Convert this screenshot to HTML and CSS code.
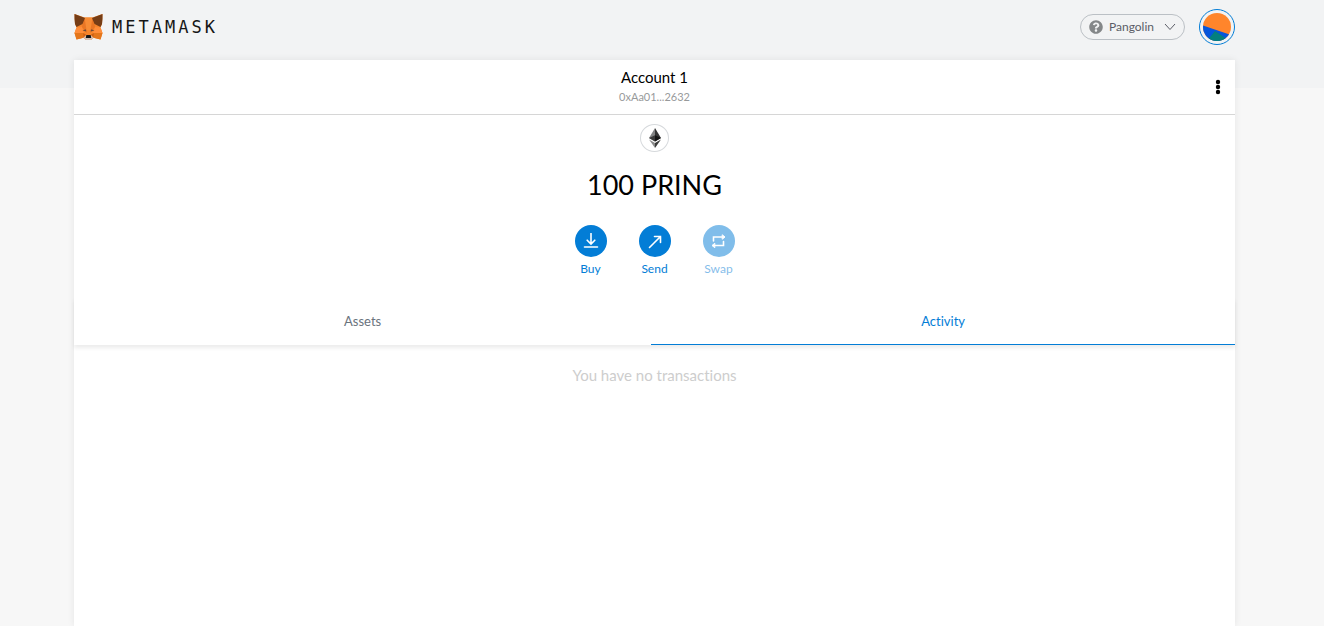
FILE: index.html
```html
<!DOCTYPE html>
<html lang="en">
<head>
<meta charset="utf-8">
<meta name="viewport" content="width=device-width, initial-scale=1">
<title>MetaMask</title>
<link rel="stylesheet" href="styles.css">
</head>
<body>
<div class="app">
  <header class="header">
    <a class="brand" href="#" aria-label="MetaMask home">
      <svg class="brand-fox" viewBox="0 0 29 28" aria-hidden="true">
        <path fill="#f6852b" d="M.5 1 10.500 4.500H18.500L28.500 1 28 11 26.500 14.500 28.500 20 26.500 26.500 19.500 24.800 17 27H12L9.500 24.800 2.500 26.500.5 20 2.500 14.500 1 11Z"/>
        <path fill="#ff8d3a" d="M2.500 14.500 8 14 10 20H.5ZM26.500 14.500 21 14 19 20H28.500Z"/>
        <path fill="#e97625" d="M10.500 4.500 14 12 12.500 20 8 14 8.500 11ZM18.500 4.500 15 12 16.500 20 21 14 20.500 11Z"/>
        <path fill="#f88c35" d="M10.500 4.500H18.500L16.500 17H12.500Z"/>
        <path fill="#763d16" d="M.5 1 11 5 8.500 11 2.500 14 1 11 .5 6ZM28.500 1 18 5 20.500 11 26.500 14 28 11 28.500 6Z"/>
        <path fill="#e4761b" d="M.5 20H9L9.500 24.800 2.500 26.500ZM28.500 20H20L19.500 24.800 26.500 26.500Z"/>
        <path fill="#cd6116" d="M9 20 12 21.500 9.500 24.800ZM20 20 17 21.500 19.500 24.800Z"/>
        <path fill="#d5bfb2" d="M9.500 24.800 12 22.500H17L19.500 24.800 17 27H12Z"/>
        <path fill="#6b4b3c" d="M8.500 17.500 11.800 16.200 12.200 18.500ZM20.500 17.500 17.200 16.200 16.800 18.500Z"/>
        <path fill="#161616" d="M12.300 22H16.700L17.200 25H11.800Z"/>
      </svg>
      <span class="brand-name">METAMASK</span>
    </a>
    <div class="header-actions">
      <button class="network" type="button">
        <svg class="network-icon" viewBox="0 0 512 512" aria-hidden="true"><path fill="#848789" d="M504 256c0 137-111 248-248 248S8 393 8 256 119 8 256 8s248 111 248 248zM262.700 90c-54.500 0-89.300 23-116.500 63.800-3.500 5.300-2.400 12.400 2.700 16.300l34.700 26.300c5.200 3.900 12.600 3 16.700-2.100 17.900-22.700 30.100-35.800 57.300-35.800 20.400 0 45.700 13.100 45.700 33 0 15-12.400 22.700-32.500 34C247.100 238.500 216 254.900 216 296v4c0 6.600 5.400 12 12 12h56c6.600 0 12-5.400 12-12v-1.300c0-28.500 83.200-29.600 83.200-106.700 0-58-60.200-102-116.500-102zM256 338c-25.400 0-46 20.600-46 46s20.600 46 46 46 46-20.600 46-46-20.600-46-46-46z"/></svg>
        <span>Pangolin</span>
        <svg class="network-caret" viewBox="0 0 12 8" aria-hidden="true"><path d="M1 1 6 6.500 11 1"/></svg>
      </button>
      <button class="avatar" type="button" aria-label="Account menu">
        <svg viewBox="0 0 28 28" aria-hidden="true">
          <clipPath id="avatar-clip"><circle cx="14" cy="14" r="14"/></clipPath>
          <g clip-path="url(#avatar-clip)">
            <path fill="#ff852b" d="M0 0H28V28H0Z"/>
            <path fill="#0556dc" d="M0 12.500 28 22V28H0Z"/>
            <path fill="#03807e" d="M5 28 5.500 26 12 18 24 26V28Z"/>
          </g>
        </svg>
      </button>
    </div>
  </header>

  <main class="wallet">
    <section class="account-bar">
      <button class="account" type="button">
        <span class="account-name">Account 1</span>
        <span class="account-address">0xAa01...2632</span>
      </button>
      <button class="options" type="button" aria-label="Account options">
        <svg viewBox="0 0 6 16" aria-hidden="true"><circle cx="3" cy="3" r="2.200"/><circle cx="3" cy="8" r="2.200"/><circle cx="3" cy="13" r="2.200"/></svg>
      </button>
    </section>

    <section class="overview">
      <div class="token">
        <svg viewBox="0 0 12 20" aria-hidden="true">
          <path fill="#828384" d="M6 0V13.500L0 10Z"/>
          <path fill="#343434" d="M6 0V13.500L12 10Z"/>
          <path fill="#393939" d="M0 10 6 7.300V13.500Z"/>
          <path fill="#141414" d="M12 10 6 7.300V13.500Z"/>
          <path fill="#8c8c8c" d="M0 11.500 6 15V20Z"/>
          <path fill="#3c3c3b" d="M12 11.500 6 15V20Z"/>
        </svg>
      </div>
      <h1 class="balance">100 PRING</h1>
      <div class="actions">
        <button class="action" type="button">
          <span class="action-icon"><svg viewBox="0 0 16 16" aria-hidden="true"><path d="M8 .5V10.800M4.200 7.200 8 11 11.800 7.200M1.500 14H14.500"/></svg></span>
          Buy
        </button>
        <button class="action" type="button">
          <span class="action-icon"><svg viewBox="0 0 16 16" aria-hidden="true"><path d="M2.500 14.500 13.500 3.500M7.500 3.500H13.500V9.500"/></svg></span>
          Send
        </button>
        <button class="action" type="button" disabled>
          <span class="action-icon"><svg viewBox="0 0 16 16" aria-hidden="true"><path d="M2.500 8V4H12M12.500 8.500V12.500H3"/><path class="solid" d="M11.500 2 14 4 11.500 6ZM3.500 10.500 1 12.500 3.500 14.500Z"/></svg></span>
          Swap
        </button>
      </div>
    </section>

    <div class="tabs" role="tablist">
      <button class="tab" type="button" role="tab" aria-selected="false">Assets</button>
      <button class="tab tab-active" type="button" role="tab" aria-selected="true">Activity</button>
    </div>
    <p class="empty">You have no transactions</p>
  </main>
</div>
</body>
</html>
```
FILE: styles.css
```css
* { box-sizing: border-box; }

body {
  margin: 0;
  padding-right: 15px;
  background: linear-gradient(#f2f3f4 88px, #f7f7f7 88px);
  color: #000;
  font-family: Lato, "Open Sans", sans-serif;
  font-variant-ligatures: none;
}

button {
  margin: 0;
  padding: 0;
  border: 0;
  background: none;
  color: inherit;
  font: inherit;
  cursor: pointer;
}

svg { display: block; }

.app {
  display: flex;
  flex-direction: column;
  min-height: 100vh;
  padding: 0 74px;
}

.header {
  display: flex;
  align-items: center;
  justify-content: space-between;
  padding: 9px 0 15px;
}

.brand {
  display: flex;
  align-items: center;
  gap: 9px;
  color: #161616;
  text-decoration: none;
}

.brand-fox { width: 29px; height: 28px; }

.brand-name {
  font: 17px/24px "DejaVu Sans Mono", monospace;
  letter-spacing: 3px;
}

.header-actions {
  display: flex;
  align-items: center;
  gap: 14px;
}

.network {
  display: flex;
  align-items: center;
  height: 26px;
  padding: 0 8px;
  border: 1px solid #bbc0c5;
  border-radius: 13px;
  color: #5b5d67;
  font-size: 12px;
  line-height: 16px;
}

.network-icon { width: 14px; height: 14px; margin-right: 6px; }

.network-caret {
  width: 12px;
  height: 8px;
  margin-left: 10px;
  fill: none;
  stroke: #5b5d67;
}

.avatar {
  width: 36px;
  height: 36px;
  padding: 3px;
  border: 1px solid #037dd6;
  border-radius: 50%;
}

.avatar svg { width: 28px; height: 28px; }

.wallet {
  flex: 1;
  background: #fff;
  box-shadow: 0 0 7px rgba(0, 0, 0, 0.08);
}

.account-bar {
  display: grid;
  grid-template-columns: 1fr auto 1fr;
  align-items: center;
  height: 55px;
  border-bottom: 1px solid #d6d6d6;
}

.account {
  display: flex;
  flex-direction: column;
  grid-column: 2;
  align-items: center;
}

.account-name { font-size: 15px; line-height: 20px; }

.account-address {
  color: #989a9b;
  font-size: 11px;
  line-height: 20px;
}

.options { justify-self: end; padding: 0 14px; }
.options svg { width: 6px; height: 16px; }

.overview {
  display: flex;
  flex-direction: column;
  align-items: center;
  padding: 9px 0 21px;
}

.token {
  display: grid;
  place-items: center;
  width: 29px;
  height: 28px;
  border: 1px solid #d6d9dc;
  border-radius: 50%;
}

.token svg { width: 12px; height: 20px; }

.balance {
  margin: 13px 0 20px;
  font-size: 27px;
  font-weight: 400;
  line-height: 40px;
}

.actions { display: flex; gap: 16px; }

.action {
  display: flex;
  flex-direction: column;
  align-items: center;
  gap: 4px;
  width: 48px;
  color: #037dd6;
  font-size: 12px;
  line-height: 16px;
}

.action:disabled { opacity: 0.5; cursor: default; }

.action-icon {
  display: grid;
  place-items: center;
  width: 32px;
  height: 32px;
  border-radius: 50%;
  background: #037dd6;
}

.action-icon svg {
  width: 16px;
  height: 16px;
  fill: none;
  stroke: #fff;
  stroke-width: 1.6;
  stroke-linecap: round;
}

.action-icon .solid { fill: #fff; stroke-width: 1; }

.tabs {
  display: flex;
  box-shadow: 0 3px 4px rgba(0, 0, 0, 0.08);
}

.tab {
  flex: 1 1 auto;
  height: 47px;
  border-bottom: 1px solid transparent;
  color: #6a737d;
  font-size: 13px;
}

.tab-active { border-color: #037dd6; color: #037dd6; }

.empty {
  margin: 0;
  padding: 20px 0;
  color: #cdcdcd;
  font-size: 15px;
  line-height: 20px;
  text-align: center;
}
```
